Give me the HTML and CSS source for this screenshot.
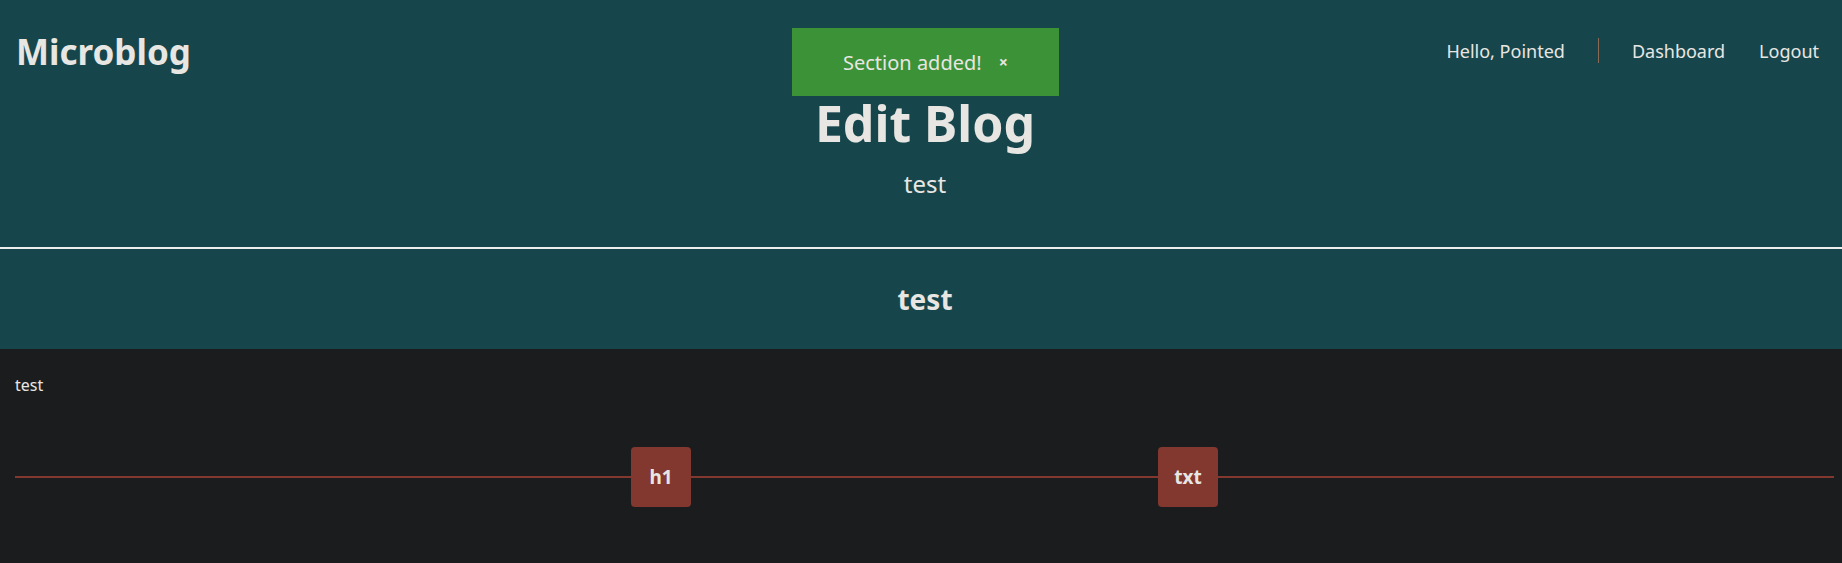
FILE: index.html
```html
<!DOCTYPE html>
<html lang="en">
<head>
<meta charset="utf-8">
<title>Edit Blog - Microblog</title>
<link rel="stylesheet" href="styles.css">
</head>
<body>
<header class="top">
  <div class="topbar">
    <a class="brand" href="#">Microblog</a>
    <nav class="nav">
      <span class="nav-item">Hello, Pointed</span>
      <span class="nav-sep"></span>
      <a class="nav-item" href="#">Dashboard</a>
      <a class="nav-item" href="#">Logout</a>
    </nav>
  </div>
  <div class="hero">
    <h1 class="hero-title">Edit Blog</h1>
    <p class="hero-sub">test</p>
  </div>
</header>
<hr class="divider">
<section class="blog-head">
  <h2 class="blog-title">test</h2>
</section>
<main class="content">
  <p class="blog-desc">test</p>
  <div class="timeline">
    <div class="timeline-line"></div>
    <div class="timeline-nodes">
      <button class="node">h1</button>
      <button class="node">txt</button>
    </div>
  </div>
</main>
<div class="toast">
  <span class="toast-text">Section added!</span>
  <span class="toast-close">×</span>
</div>
</body>
</html>
```
FILE: styles.css
```css
* { box-sizing: border-box; }
html, body {
  margin: 0;
  padding: 0;
  background: #1b1c1e;
  color: #e8e6e3;
  font-family: "Noto Sans", "DejaVu Sans", sans-serif;
}
.top {
  background: #16464c;
  padding: 27px 0 47px 8px;
}
.topbar {
  display: flex;
  justify-content: space-between;
  align-items: center;
  padding: 0 8px 0 8px;
}
.brand {
  font-size: 35px;
  font-weight: 700;
  color: #e8e6e3;
  text-decoration: none;
  line-height: 49px;
}
.nav {
  display: flex;
  align-items: center;
  margin-top: -2px;
}
.nav-item {
  font-size: 18px;
  color: #e8e6e3;
  text-decoration: none;
  padding: 0 17px;
}
.nav-item:last-child { padding-right: 15px; }
.nav-sep {
  width: 1px;
  height: 25px;
  background: #8a6a55;
  margin: 0 16px 0 16px;
}
.hero {
  text-align: center;
}
.hero-title {
  margin: 13px 0 0;
  font-size: 50px;
  font-weight: 700;
  line-height: 68px;
}
.hero-sub {
  margin: 10px 0 0;
  font-size: 24px;
  line-height: 33px;
}
.divider {
  margin: 0;
  border: 0;
  height: 2px;
  background: #eeeeee;
}
.blog-head {
  background: #16464c;
  height: 100px;
  display: flex;
  align-items: center;
  justify-content: center;
  padding-left: 8px;
}
.blog-title {
  margin: 0;
  font-size: 28px;
  font-weight: 700;
}
.content {
  padding: 25px 8px 40px 15px;
}
.blog-desc {
  margin: 0;
  font-size: 16px;
  line-height: 22px;
}
.timeline {
  position: relative;
  margin-top: 51px;
  height: 60px;
}
.timeline-line {
  position: absolute;
  left: 0;
  right: 0;
  top: 29px;
  height: 2px;
  background: #82372f;
}
.timeline-nodes {
  position: relative;
  display: flex;
  justify-content: center;
  gap: 467px;
}
.node {
  width: 60px;
  height: 60px;
  border: 0;
  border-radius: 4px;
  background: #82372f;
  color: #e8e6e3;
  font-family: "Noto Sans", "DejaVu Sans", sans-serif;
  font-size: 19px;
  font-weight: 700;
  padding: 0;
}
.toast {
  position: absolute;
  top: 28px;
  left: 792px;
  height: 68px;
  display: flex;
  align-items: center;
  gap: 17px;
  padding: 0 51px;
  background: #3c9237;
  color: #e8e6e3;
}
.toast-text { font-size: 20px; }
.toast-close { font-size: 16px; font-weight: 700; }
```
